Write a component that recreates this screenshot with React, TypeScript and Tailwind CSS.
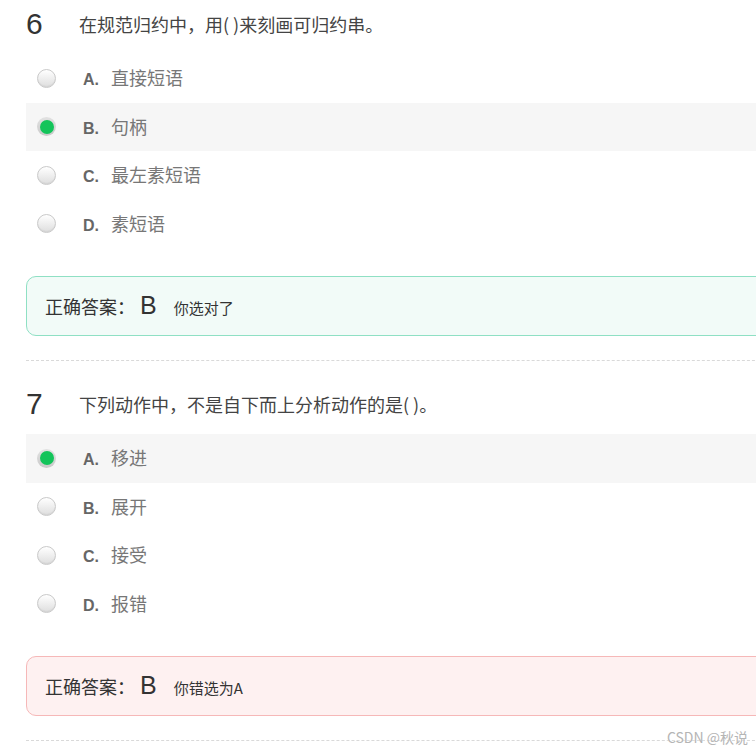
const questions = [
  {
    no: 6,
    title: '在规范归约中，用( )来刻画可归约串。',
    options: [
      { key: 'A', text: '直接短语' },
      { key: 'B', text: '句柄' },
      { key: 'C', text: '最左素短语' },
      { key: 'D', text: '素短语' },
    ],
    picked: 'B',
    answer: 'B',
  },
  {
    no: 7,
    title: '下列动作中，不是自下而上分析动作的是( )。',
    options: [
      { key: 'A', text: '移进' },
      { key: 'B', text: '展开' },
      { key: 'C', text: '接受' },
      { key: 'D', text: '报错' },
    ],
    picked: 'A',
    answer: 'B',
  },
]

const cjk = "font-['Noto_Sans_CJK_SC',sans-serif]"

const Radio = ({ checked }: { checked: boolean }) =>
  checked ? (
    <span className="flex h-[19px] w-[19px] items-center justify-center rounded-full bg-gradient-to-b from-[#e2e2e2] to-[#c9c9c9]">
      <span className="h-[14px] w-[14px] rounded-full bg-[#13c45a]" />
    </span>
  ) : (
    <span className="block h-[19px] w-[19px] rounded-full border border-[#c9c9c9] bg-gradient-to-b from-[#ffffff] to-[#dedede] shadow-[inset_0_-1px_1px_rgba(0,0,0,0.05)]" />
  )

const Question = ({ q, first }: { q: (typeof questions)[number]; first: boolean }) => {
  const right = q.picked === q.answer
  return (
    <div className={first ? '' : 'pt-[19px]'}>
      <div className="flex h-[54px] items-center pb-[6px]">
        <span className="w-[53px] font-['Liberation_Sans',sans-serif] text-[30px] leading-none text-[#333]">
          {q.no}
        </span>
        <span className={`${cjk} text-[18px] leading-none text-[#444]`}>{q.title}</span>
      </div>
      <div>
        {q.options.map((o) => (
          <div
            key={o.key}
            className={`flex h-[48.5px] items-center pl-[11px] ${o.key === q.picked ? 'bg-[#f6f6f6]' : ''}`}
          >
            <Radio checked={o.key === q.picked} />
            <span className="ml-[27px] flex items-baseline">
              <span className="w-[28px] font-['Liberation_Sans',sans-serif] text-[16px] font-bold text-[#666]">
                {o.key}.
              </span>
              <span className={`${cjk} text-[18px] text-[#777]`}>{o.text}</span>
            </span>
          </div>
        ))}
      </div>
      <div
        className={`mt-7 flex h-[60px] items-baseline rounded-[10px] border pl-[18px] pt-[10px] ${
          right ? 'border-[#8fe0c4] bg-[#f2fbf8]' : 'border-[#f6b8b8] bg-[#fef1f1]'
        }`}
      >
        <span className={`${cjk} text-[18px] text-[#333]`}>正确答案：</span>
        <span className="ml-[5px] font-['Liberation_Sans',sans-serif] text-[25px] text-[#333]">
          {q.answer}
        </span>
        <span className={`${cjk} ml-[17px] text-[15px] text-[#333]`}>
          {right ? '你选对了' : `你错选为${q.picked}`}
        </span>
      </div>
      <div className="mt-6 border-t border-dashed border-[#d9d9d9]" />
    </div>
  )
}

export default function App() {
  return (
    <div className="relative h-[751px] w-[756px] overflow-hidden bg-white">
      <div className="w-[820px] pl-[26px]">
        {questions.map((q, i) => (
          <Question key={q.no} q={q} first={i === 0} />
        ))}
      </div>
      <span
        className={`absolute right-[8px] top-[727px] ${cjk} text-[14px] text-[#b5b5b5] [text-shadow:0_0_2px_#fff]`}
      >
        CSDN @秋说
      </span>
    </div>
  )
}
